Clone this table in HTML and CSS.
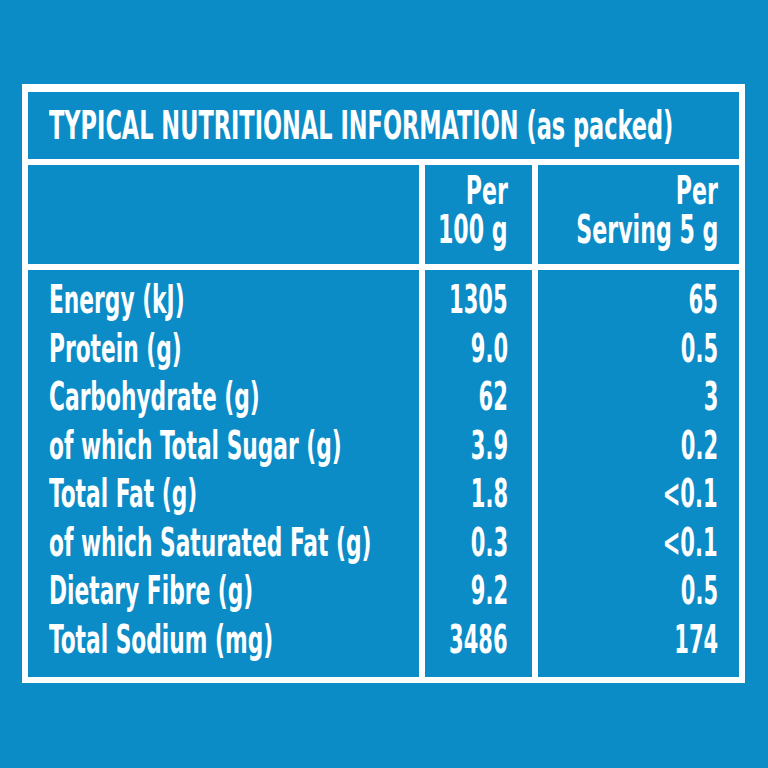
FILE: index.html
```html
<!DOCTYPE html>
<html lang="en">
<head>
<meta charset="utf-8">
<title>Typical Nutritional Information</title>
<link rel="stylesheet" href="styles.css">
</head>
<body>
<div class="page">
  <div class="panel">
    <div class="cell title"><span class="t">TYPICAL NUTRITIONAL INFORMATION (as packed)</span></div>
    <div class="cell head"></div>
    <div class="cell head num col2"><span class="t">Per</span><span class="t">100 g</span></div>
    <div class="cell head num col3"><span class="t">Per</span><span class="t">Serving 5 g</span></div>
    <div class="cell body labels">
      <span class="t">Energy (kJ)</span>
      <span class="t">Protein (g)</span>
      <span class="t">Carbohydrate (g)</span>
      <span class="t">of which Total Sugar (g)</span>
      <span class="t">Total Fat (g)</span>
      <span class="t">of which Saturated Fat (g)</span>
      <span class="t">Dietary Fibre (g)</span>
      <span class="t">Total Sodium (mg)</span>
    </div>
    <div class="cell body num col2">
      <span class="t">1305</span>
      <span class="t">9.0</span>
      <span class="t">62</span>
      <span class="t">3.9</span>
      <span class="t">1.8</span>
      <span class="t">0.3</span>
      <span class="t">9.2</span>
      <span class="t">3486</span>
    </div>
    <div class="cell body num col3">
      <span class="t">65</span>
      <span class="t">0.5</span>
      <span class="t">3</span>
      <span class="t">0.2</span>
      <span class="t">&lt;0.1</span>
      <span class="t">&lt;0.1</span>
      <span class="t">0.5</span>
      <span class="t">174</span>
    </div>
  </div>
</div>
</body>
</html>
```
FILE: styles.css
```css
html, body {
  margin: 0;
  padding: 0;
  background: #0b8cc7;
  overflow: hidden;
}
.page {
  width: 768px;
  height: 768px;
  box-sizing: border-box;
  padding: 84px 0 0 22px;
  font-family: "DejaVu Sans Condensed", "DejaVu Sans", sans-serif;
  font-stretch: condensed;
  font-weight: bold;
  font-size: 39px;
  color: #ffffff;
}
.panel {
  width: 723px;
  display: grid;
  grid-template-columns: 391px 107px 201px;
  grid-template-rows: 67px 99px 407px;
  gap: 6px;
  padding: 8px 6px 6px 6px;
  box-sizing: border-box;
  background: #ffffff;
}
.cell {
  background: #0b8cc7;
  display: flex;
  flex-direction: column;
  overflow: hidden;
}
.title {
  grid-column: 1 / 4;
  justify-content: center;
  padding-left: 21px;
  align-items: flex-start;
}
.head {
  padding-top: 6px;
  line-height: 39px;
}
.body {
  padding-top: 6px;
  line-height: 48.57px;
}
.labels {
  padding-left: 21px;
  align-items: flex-start;
}
.num {
  align-items: flex-end;
}
.col2 {
  padding-right: 24px;
}
.col3 {
  padding-right: 21px;
}
.t {
  display: inline-block;
  white-space: nowrap;
  transform: scaleX(0.62);
  transform-origin: left center;
}
.title .t {
  transform: scaleX(0.64);
}
.head .t {
  transform: scaleX(0.63);
}
.num .t {
  transform-origin: right center;
}
.body.num .t {
  transform: scaleX(0.6);
}
```
